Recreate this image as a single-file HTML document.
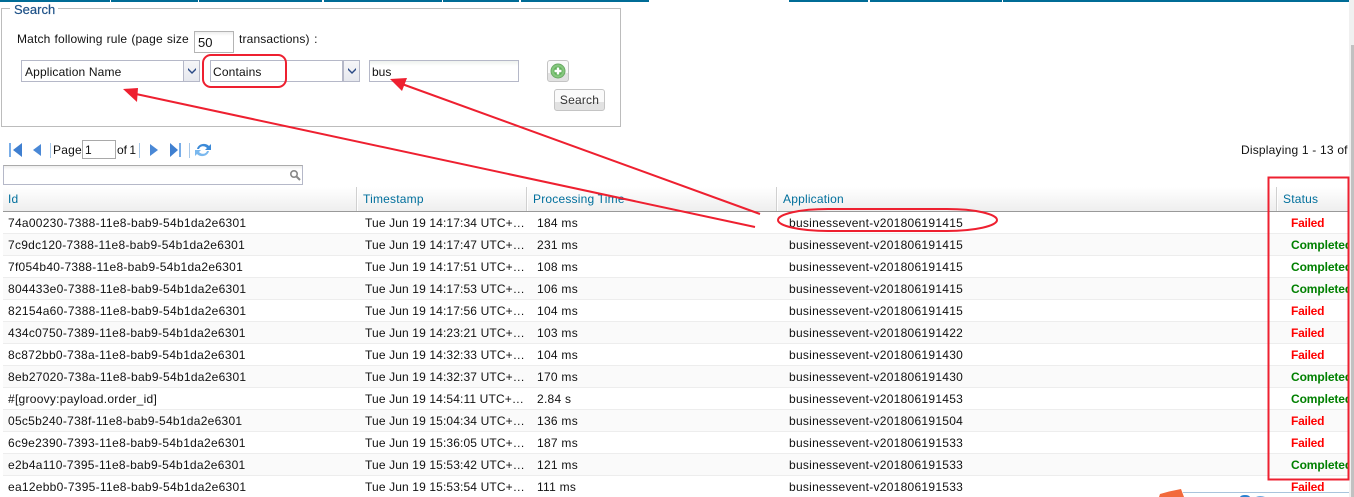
<!DOCTYPE html>
<html><head><meta charset="utf-8">
<style>
html,body{margin:0;padding:0;background:#fff;width:1354px;height:497px;overflow:hidden}
body{position:relative;font-family:"Liberation Sans",sans-serif;font-size:12px;color:#111}
.a{position:absolute}
.t{position:absolute;white-space:nowrap;letter-spacing:.27px;line-height:14px}
.t[style*="left:365px"]{letter-spacing:.13px}
.bar{position:absolute;top:0;height:2px;background:#006c96}
.inp{position:absolute;box-sizing:border-box;border:1px solid #b5b8c8;background:#fff;height:22px}
.trg{position:absolute;box-sizing:border-box;width:17px;height:22px;border:1px solid #b5b8c8;background:linear-gradient(#f6f6f8,#e6e8ee)}
.trg svg{position:absolute;left:3px;top:5px}
.hd{position:absolute;top:187px;height:25px;background:linear-gradient(#fff,#eeeeee);border-bottom:1px solid #999;box-sizing:border-box}
.sep{position:absolute;top:187px;width:1px;height:24px;background:#d0d0d0;border-right:1px solid #fff}
.h{position:absolute;top:192px;color:#006f9c;letter-spacing:.2px;line-height:14px;white-space:nowrap}
.row{position:absolute;left:3px;width:1346px;height:22px;box-sizing:border-box;border-bottom:1px solid #ededed}
.t.f{color:#f00;font-weight:bold;letter-spacing:-.25px}
.t.c{color:#008000;font-weight:bold;letter-spacing:-.1px}
.t.p{letter-spacing:.2px}
</style></head><body>
<div class="bar" style="left:0;width:110px"></div>
<div class="bar" style="left:111px;width:87px"></div>
<div class="bar" style="left:199px;width:123px"></div>
<div class="bar" style="left:324px;width:118px"></div>
<div class="bar" style="left:443px;width:76px"></div>
<div class="bar" style="left:521px;width:128px"></div>
<div class="bar" style="left:789px;width:79px"></div>
<div class="bar" style="left:870px;width:132px"></div>
<div class="bar" style="left:1003px;width:346px"></div>
<div class="a" style="left:1349px;top:0;width:5px;height:497px;background:#f0f0f0"></div>
<div class="a" style="left:1351px;top:45px;width:3px;height:452px;background:#c1c1c1"></div>

<div class="a" style="left:1px;top:8px;width:620px;height:119px;box-sizing:border-box;border:1px solid #bcbcbc"></div>
<div class="a" style="left:10px;top:2px;background:#fff;padding:0 3px 0 4px;color:#1f5288;font-size:13px;letter-spacing:0;line-height:15px;-webkit-text-stroke:.2px #1f5288">Search</div>
<div class="t p" style="left:17px;top:32px;word-spacing:.6px;letter-spacing:.15px">Match following rule (page size</div>
<div class="inp" style="left:194px;top:31px;width:40px;padding:4px 0 0 3px;line-height:14px;font-size:13px;border-color:#b4b4b4;background:linear-gradient(#eee,#fff 4px)">50</div>
<div class="t p" style="left:239px;top:32px;word-spacing:1px;letter-spacing:.15px">transactions) :</div>

<div class="inp" style="left:21px;top:60px;width:163px;padding:4px 0 0 3px;line-height:14px;letter-spacing:.15px">Application Name</div>
<div class="trg" style="left:183px;top:60px"><svg width="10" height="10"><path d="M1 2 L5 6 L9 2 L9 4 L5 8 L1 4Z" fill="#2a4a85"/></svg></div>
<div class="inp" style="left:210px;top:60px;width:133px;padding:4px 0 0 2px;line-height:14px;letter-spacing:.15px">Contains</div>
<div class="trg" style="left:343px;top:60px"><svg width="10" height="10"><path d="M1 2 L5 6 L9 2 L9 4 L5 8 L1 4Z" fill="#2a4a85"/></svg></div>
<div class="inp" style="left:369px;top:60px;width:150px;padding:4px 0 0 2px;line-height:14px;background:linear-gradient(#eef2ee,#fff 5px)">bus</div>

<div class="a" style="left:547px;top:60px;width:22px;height:22px;box-sizing:border-box;border:1px solid #c4c4c4;border-radius:3px;background:linear-gradient(#fafafa 60%,#e2e2e2 60%)">
<svg width="20" height="20" style="position:absolute;left:0;top:0"><circle cx="10" cy="10" r="7" fill="#86c87e" stroke="#6aaa64"/><circle cx="10" cy="10" r="4.5" fill="#5fae58"/><path d="M10 6.5V13.5M6.5 10H13.5" stroke="#fff" stroke-width="2.4"/></svg></div>
<div class="a" style="left:554px;top:89px;width:51px;height:22px;box-sizing:border-box;border:1px solid #c4c4c4;border-radius:3px;background:linear-gradient(#fafafa 60%,#e2e2e2 60%);text-align:center;line-height:21px;color:#333;letter-spacing:.2px">Search</div>

<svg class="a" style="left:8px;top:142px" width="205" height="16">
<path d="M1 1H3V15H1Z" fill="#7aaee8"/><path d="M14 1V15L5 8Z" fill="#3f7fd0"/>
<path d="M33 2V14L25 8Z" fill="#4a88d6"/>
<rect x="42" y="1" width="1" height="15" fill="#a8c8e8"/>
<rect x="131" y="1" width="1" height="15" fill="#a8c8e8"/>
<path d="M142 2V14L150 8Z" fill="#4a88d6"/>
<path d="M162 1V15L170 8Z" fill="#3f7fd0"/><path d="M171 1H173V15H171Z" fill="#7aaee8"/>
<rect x="181" y="1" width="1" height="15" fill="#a8c8e8"/>
<path d="M189 7C190 2 197 0 201 4L203 2V8H197L199 6C196 3 192 4 191 7Z" fill="#3c8ad8"/>
<path d="M201 9C200 14 193 16 189 12L187 14V8H193L191 10C194 13 198 12 199 9Z" fill="#7ab8ee"/>
</svg>
<div class="t p" style="left:53px;top:143px">Page</div>
<div class="a" style="left:82px;top:140px;width:34px;height:19px;box-sizing:border-box;border:1px solid #a9a9a9;padding:2px 0 0 2px;line-height:14px">1</div>
<div class="t p" style="left:117px;top:143px;letter-spacing:0;word-spacing:-1px">of 1</div>
<div class="t p" style="left:1241px;top:143px">Displaying 1 - 13 of</div>

<div class="a" style="left:3px;top:165px;width:300px;height:20px;box-sizing:border-box;border:1px solid #b5b8c8;border-top-color:#aaa;background:linear-gradient(#eee,#fff 4px)">
<svg width="12" height="12" style="position:absolute;left:285px;top:3px"><circle cx="5" cy="5" r="3.2" fill="none" stroke="#888" stroke-width="1.6"/><path d="M7.5 7.5L11 11" stroke="#888" stroke-width="2"/></svg></div>

<div class="hd" style="left:3px;width:1346px"></div>
<div class="sep" style="left:356px"></div>
<div class="sep" style="left:526px"></div>
<div class="sep" style="left:776px"></div>
<div class="sep" style="left:1276px"></div>
<div class="h" style="left:8px">Id</div>
<div class="h" style="left:363px">Timestamp</div>
<div class="h" style="left:533px">Processing Time</div>
<div class="h" style="left:783px">Application</div>
<div class="h" style="left:1283px">Status</div>

<div class="row" style="top:212px"></div>
<div class="row" style="top:234px;background:#fafafa"></div>
<div class="row" style="top:256px"></div>
<div class="row" style="top:278px;background:#fafafa"></div>
<div class="row" style="top:300px"></div>
<div class="row" style="top:322px;background:#fafafa"></div>
<div class="row" style="top:344px"></div>
<div class="row" style="top:366px;background:#fafafa"></div>
<div class="row" style="top:388px"></div>
<div class="row" style="top:410px;background:#fafafa"></div>
<div class="row" style="top:432px"></div>
<div class="row" style="top:454px;background:#fafafa"></div>

<div class="t" style="left:8px;top:216px">74a00230-7388-11e8-bab9-54b1da2e6301</div><div class="t" style="left:365px;top:216px">Tue Jun 19 14:17:34 UTC+…</div><div class="t" style="left:537px;top:216px">184 ms</div><div class="t" style="left:789px;top:216px">businessevent-v201806191415</div><div class="t f" style="left:1291px;top:216px">Failed</div>
<div class="t" style="left:8px;top:238px">7c9dc120-7388-11e8-bab9-54b1da2e6301</div><div class="t" style="left:365px;top:238px">Tue Jun 19 14:17:47 UTC+…</div><div class="t" style="left:537px;top:238px">231 ms</div><div class="t" style="left:789px;top:238px">businessevent-v201806191415</div><div class="t c" style="left:1291px;top:238px;width:58px;overflow:hidden">Completed</div>
<div class="t" style="left:8px;top:260px">7f054b40-7388-11e8-bab9-54b1da2e6301</div><div class="t" style="left:365px;top:260px">Tue Jun 19 14:17:51 UTC+…</div><div class="t" style="left:537px;top:260px">108 ms</div><div class="t" style="left:789px;top:260px">businessevent-v201806191415</div><div class="t c" style="left:1291px;top:260px;width:58px;overflow:hidden">Completed</div>
<div class="t" style="left:8px;top:282px">804433e0-7388-11e8-bab9-54b1da2e6301</div><div class="t" style="left:365px;top:282px">Tue Jun 19 14:17:53 UTC+…</div><div class="t" style="left:537px;top:282px">106 ms</div><div class="t" style="left:789px;top:282px">businessevent-v201806191415</div><div class="t c" style="left:1291px;top:282px;width:58px;overflow:hidden">Completed</div>
<div class="t" style="left:8px;top:304px">82154a60-7388-11e8-bab9-54b1da2e6301</div><div class="t" style="left:365px;top:304px">Tue Jun 19 14:17:56 UTC+…</div><div class="t" style="left:537px;top:304px">104 ms</div><div class="t" style="left:789px;top:304px">businessevent-v201806191415</div><div class="t f" style="left:1291px;top:304px">Failed</div>
<div class="t" style="left:8px;top:326px">434c0750-7389-11e8-bab9-54b1da2e6301</div><div class="t" style="left:365px;top:326px">Tue Jun 19 14:23:21 UTC+…</div><div class="t" style="left:537px;top:326px">103 ms</div><div class="t" style="left:789px;top:326px">businessevent-v201806191422</div><div class="t f" style="left:1291px;top:326px">Failed</div>
<div class="t" style="left:8px;top:348px">8c872bb0-738a-11e8-bab9-54b1da2e6301</div><div class="t" style="left:365px;top:348px">Tue Jun 19 14:32:33 UTC+…</div><div class="t" style="left:537px;top:348px">104 ms</div><div class="t" style="left:789px;top:348px">businessevent-v201806191430</div><div class="t f" style="left:1291px;top:348px">Failed</div>
<div class="t" style="left:8px;top:370px">8eb27020-738a-11e8-bab9-54b1da2e6301</div><div class="t" style="left:365px;top:370px">Tue Jun 19 14:32:37 UTC+…</div><div class="t" style="left:537px;top:370px">170 ms</div><div class="t" style="left:789px;top:370px">businessevent-v201806191430</div><div class="t c" style="left:1291px;top:370px;width:58px;overflow:hidden">Completed</div>
<div class="t" style="left:8px;top:392px">#[groovy:payload.order_id]</div><div class="t" style="left:365px;top:392px">Tue Jun 19 14:54:11 UTC+…</div><div class="t" style="left:537px;top:392px">2.84 s</div><div class="t" style="left:789px;top:392px">businessevent-v201806191453</div><div class="t c" style="left:1291px;top:392px;width:58px;overflow:hidden">Completed</div>
<div class="t" style="left:8px;top:414px">05c5b240-738f-11e8-bab9-54b1da2e6301</div><div class="t" style="left:365px;top:414px">Tue Jun 19 15:04:34 UTC+…</div><div class="t" style="left:537px;top:414px">136 ms</div><div class="t" style="left:789px;top:414px">businessevent-v201806191504</div><div class="t f" style="left:1291px;top:414px">Failed</div>
<div class="t" style="left:8px;top:436px">6c9e2390-7393-11e8-bab9-54b1da2e6301</div><div class="t" style="left:365px;top:436px">Tue Jun 19 15:36:05 UTC+…</div><div class="t" style="left:537px;top:436px">187 ms</div><div class="t" style="left:789px;top:436px">businessevent-v201806191533</div><div class="t f" style="left:1291px;top:436px">Failed</div>
<div class="t" style="left:8px;top:458px">e2b4a110-7395-11e8-bab9-54b1da2e6301</div><div class="t" style="left:365px;top:458px">Tue Jun 19 15:53:42 UTC+…</div><div class="t" style="left:537px;top:458px">121 ms</div><div class="t" style="left:789px;top:458px">businessevent-v201806191533</div><div class="t c" style="left:1291px;top:458px;width:58px;overflow:hidden">Completed</div>
<div class="t" style="left:8px;top:480px">ea12ebb0-7395-11e8-bab9-54b1da2e6301</div><div class="t" style="left:365px;top:480px">Tue Jun 19 15:53:54 UTC+…</div><div class="t" style="left:537px;top:480px">111 ms</div><div class="t" style="left:789px;top:480px">businessevent-v201806191533</div><div class="t f" style="left:1291px;top:480px">Failed</div>

<svg class="a" style="left:0;top:0" width="1354" height="497">
<rect x="203" y="55" width="83" height="32" rx="8" fill="none" stroke="#ee2030" stroke-width="2"/>
<rect x="778" y="209" width="219" height="22" rx="50" ry="11" fill="none" stroke="#ee2030" stroke-width="2"/>
<rect x="1268.5" y="177.5" width="80" height="302" fill="none" stroke="#ee2030" stroke-width="2"/>
<path d="M760 214L402 84" stroke="#ee2030" stroke-width="2" fill="none"/>
<path d="M390 79L407 78L402 91Z" fill="#ee2030"/>
<path d="M755 227L136 94" stroke="#ee2030" stroke-width="2" fill="none"/>
<path d="M123 89L138 88L137 102Z" fill="#ee2030"/>
<path d="M1159 497L1160 494Q1170 491 1181 489L1184 497Z" fill="#f26a3c"/>
<rect x="1183" y="492" width="166" height="1" fill="#a9c4dc"/>
<path d="M1240 497Q1241 495 1245 495Q1249 495 1250 497Z" fill="#2a80d0"/>
<path d="M1256 497Q1260 495 1265 497Z" fill="#6aa8e0"/>
</svg>
</body></html>
